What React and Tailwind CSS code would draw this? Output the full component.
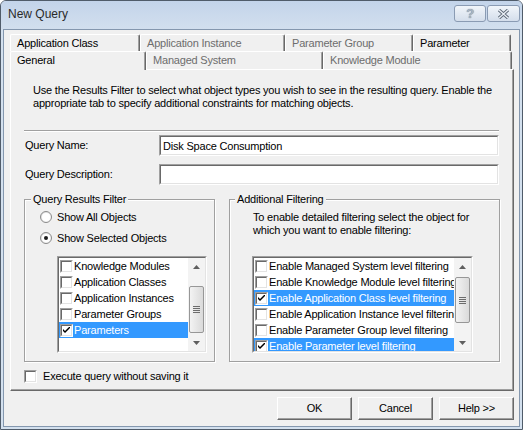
import React from "react";

function CheckBox({ checked }) {
  return (
    <div className="w-[13px] h-[13px] shrink-0 bg-white border border-t-[#a0a0a0] border-l-[#a0a0a0] border-b-white border-r-white">
      <div className="w-full h-full border border-t-[#696969] border-l-[#696969] border-b-[#e3e3e3] border-r-[#e3e3e3] flex items-center justify-center">
        {checked && (
          <svg width="7" height="7" viewBox="0 0 7 7">
            <path d="M0 2 L0 4 L2 6 L7 1 L7 -1 L2 4 Z" fill="#000" />
          </svg>
        )}
      </div>
    </div>
  );
}

function Radio({ checked }) {
  return (
    <div className="w-[12px] h-[12px] shrink-0 rounded-full border border-[#8a8a8a] bg-gradient-to-br from-[#dcdcdc] to-white flex items-center justify-center">
      <div className="w-[8px] h-[8px] rounded-full bg-white flex items-center justify-center">
        {checked && <div className="w-[4px] h-[4px] rounded-full bg-[#1a1a1a]" />}
      </div>
    </div>
  );
}

function Arrow({ up }) {
  return (
    <svg width="7" height="4" viewBox="0 0 7 4">
      {up ? <path d="M3.5 0 L7 4 L0 4 Z" fill="#5f5f5f" /> : <path d="M0 0 L7 0 L3.5 4 Z" fill="#5f5f5f" />}
    </svg>
  );
}

function ScrollBar({ thumbClass }) {
  return (
    <div className="w-[17px] h-full shrink-0 bg-[#f3f3f3] flex flex-col">
      <div className="h-[17px] shrink-0 flex items-center justify-center">
        <Arrow up />
      </div>
      <div className="flex-1 relative">
        <div className={`${thumbClass} mx-[1px] w-[15px] rounded-[2px] border border-[#979797] bg-gradient-to-r from-[#f3f3f3] to-[#dadada] flex flex-col items-center justify-center gap-[1px]`}>
          <div className="w-[7px] h-px bg-[#6c6c6c]" />
          <div className="w-[7px] h-px bg-[#6c6c6c]" />
          <div className="w-[7px] h-px bg-[#6c6c6c]" />
          <div className="w-[7px] h-px bg-[#6c6c6c]" />
        </div>
      </div>
      <div className="h-[17px] shrink-0 flex items-center justify-center">
        <Arrow />
      </div>
    </div>
  );
}

function ListRow({ label, checked, selected }) {
  return (
    <div
      className={
        selected
          ? "h-[16px] shrink-0 flex items-center pl-[1px] bg-[#3399ff] text-white"
          : "h-[16px] shrink-0 flex items-center pl-[1px] text-black"
      }
    >
      <CheckBox checked={checked} />
      <span className="ml-[1px] whitespace-nowrap leading-[14px]">{label}</span>
    </div>
  );
}

function Sunken({ className, children }) {
  return (
    <div className={`${className} border border-t-[#a0a0a0] border-l-[#a0a0a0] border-b-white border-r-white`}>
      <div className="w-full h-full border border-t-[#696969] border-l-[#696969] border-b-[#e3e3e3] border-r-[#e3e3e3] bg-white flex overflow-hidden">
        {children}
      </div>
    </div>
  );
}

function Tab({ className, label, disabled }) {
  return (
    <div
      className={`${className} shrink-0 border-t border-l border-t-white border-l-white border-r border-r-[#696969] shadow-[inset_-1px_0_0_#a0a0a0] rounded-t-[2px] pl-[6px] flex items-center whitespace-nowrap ${
        disabled ? "text-[#6d6d6d]" : "text-black"
      }`}
    >
      {label}
    </div>
  );
}

function GroupBox({ className, label, labelClass, children }) {
  return (
    <div className={`${className} relative border border-[#a0a0a0] shadow-[inset_1px_1px_0_#fff,1px_1px_0_#fff] flex flex-col`}>
      <div className={`${labelClass} absolute -top-[8px] px-[2px] bg-[#f0f0f0] leading-[14px] whitespace-nowrap`}>{label}</div>
      {children}
    </div>
  );
}

function Button({ children }) {
  return (
    <div className="w-[75px] h-[23px] border border-t-white border-l-white border-b-[#696969] border-r-[#696969] shadow-[inset_-1px_-1px_0_#a0a0a0] bg-[#f0f0f0] flex items-center justify-center">
      {children}
    </div>
  );
}

export default function App() {
  return (
    <div className="w-[523px] h-[430px] font-['Liberation_Sans',Arial,sans-serif] text-[11px] tracking-[-0.2px] text-black">
      <div className="w-full h-full flex flex-col bg-[#d3e0ee] border border-[#505c6a] rounded-t-[6px] overflow-hidden">
        {/* Title bar */}
        <div className="h-[28px] shrink-0 flex items-start bg-gradient-to-b from-[#c3d4ea] to-[#d2dfee]">
          <div className="mt-[6px] ml-[7px] text-[12px] tracking-normal leading-[15px] text-[#2a2a2a]">New Query</div>
          <div className="ml-auto mt-[4px] mr-[2px] flex gap-[1px]">
            <div className="w-[32px] h-[17px] rounded-[3px] border border-[#8a9bb3] bg-gradient-to-b from-[#f1f5fa] to-[#d4deeb] flex items-center justify-center">
              <span className="text-[13px] font-bold leading-none text-[#a9b4c2] [text-shadow:0_0_1px_#5d6876]">?</span>
            </div>
            <div className="w-[33px] h-[17px] rounded-[3px] border border-[#8a9bb3] bg-gradient-to-b from-[#f1f5fa] to-[#d4deeb] flex items-center justify-center">
              <svg width="13" height="10" viewBox="0 0 13 10">
                <path d="M2 1 L11 9 M11 1 L2 9" stroke="#5d6876" strokeWidth="3.2" />
                <path d="M2 1 L11 9 M11 1 L2 9" stroke="#e9eef5" strokeWidth="1.4" />
              </svg>
            </div>
          </div>
        </div>

        {/* Client area */}
        <div className="flex-1 mx-[2px] mb-[2px] border border-[#8497ae] bg-[#f0f0f0] flex flex-col">
          <div className="ml-[6px] mt-[4px] w-[504px] flex flex-col">
            {/* Tab row 1 */}
            <div className="h-[17px] flex">
              <Tab className="w-[130px] h-[17px]" label="Application Class" />
              <Tab className="w-[145px] h-[17px]" label="Application Instance" disabled />
              <Tab className="w-[128px] h-[17px]" label="Parameter Group" disabled />
              <Tab className="w-[98px] h-[17px]" label="Parameter" />
            </div>
            {/* Tab row 2 */}
            <div className="h-[18px] flex items-start">
              <div className="relative z-10 w-[136px] h-[19px] shrink-0 bg-[#f0f0f0] border-t border-l border-t-white border-l-white border-r border-r-[#696969] shadow-[inset_-1px_0_0_#a0a0a0] rounded-t-[2px] pl-[6px] pb-[1px] flex items-center">
                General
              </div>
              <Tab className="w-[177px] h-[18px]" label="Managed System" disabled />
              <Tab className="w-[189px] h-[18px]" label="Knowledge Module" disabled />
            </div>
            {/* Panel */}
            <div className="h-[322px] border-t border-l border-t-white border-l-white border-r border-b border-r-[#696969] border-b-[#696969] shadow-[inset_-1px_-1px_0_#a0a0a0] flex flex-col">
              <div className="ml-[22px] mt-[14px] leading-[13px] whitespace-nowrap">
                Use the Results Filter to select what object types you wish to see in the resulting query. Enable the
                <br />
                appropriate tab to specify additional constraints for matching objects.
              </div>
              <div className="ml-[13px] mt-[20px] w-[475px] h-[2px] border-t border-t-[#a0a0a0] border-b border-b-white" />
              <div className="ml-[14px] mt-[3px] flex items-center">
                <div className="w-[134px]">Query Name:</div>
                <Sunken className="w-[340px] h-[21px]">
                  <div className="pl-[2px] self-center leading-[14px]">Disk Space Consumption</div>
                </Sunken>
              </div>
              <div className="ml-[14px] mt-[8px] flex items-center">
                <div className="w-[134px]">Query Description:</div>
                <Sunken className="w-[340px] h-[21px]">
                  <div />
                </Sunken>
              </div>

              <div className="ml-[13px] mt-[14px] flex gap-[14px]">
                <GroupBox className="w-[191px] h-[163px]" label="Query Results Filter" labelClass="left-[6px]">
                  <div className="ml-[15px] mt-[11px] h-[12px] flex items-center">
                    <Radio />
                    <span className="ml-[5px] leading-[12px]">Show All Objects</span>
                  </div>
                  <div className="ml-[15px] mt-[9px] h-[12px] flex items-center">
                    <Radio checked />
                    <span className="ml-[5px] leading-[12px]">Show Selected Objects</span>
                  </div>
                  <Sunken className="ml-[32px] mt-[12px] w-[150px] h-[97px]">
                    <div className="w-[129px] flex flex-col">
                      <ListRow label="Knowledge Modules" />
                      <ListRow label="Application Classes" />
                      <ListRow label="Application Instances" />
                      <ListRow label="Parameter Groups" />
                      <ListRow label="Parameters" checked selected />
                    </div>
                    <ScrollBar thumbClass="mt-[11px] h-[47px]" />
                  </Sunken>
                </GroupBox>

                <GroupBox className="w-[271px] h-[163px]" label="Additional Filtering" labelClass="left-[5px]">
                  <div className="ml-[23px] mt-[11px] leading-[13px] whitespace-nowrap">
                    To enable detailed filtering select the object for
                    <br />
                    which you want to enable filtering:
                  </div>
                  <Sunken className="ml-[22px] mt-[19px] w-[221px] h-[97px]">
                    <div className="w-[200px] flex flex-col overflow-hidden">
                      <ListRow label="Enable Managed System level filtering" />
                      <ListRow label="Enable Knowledge Module level filtering" />
                      <ListRow label="Enable Application Class level filtering" checked selected />
                      <ListRow label="Enable Application Instance level filtering" />
                      <ListRow label="Enable Parameter Group level filtering" />
                      <ListRow label="Enable Parameter level filtering" checked selected />
                    </div>
                    <ScrollBar thumbClass="mt-[2px] h-[46px]" />
                  </Sunken>
                </GroupBox>
              </div>

              <div className="ml-[13px] mt-[8px] flex items-center">
                <CheckBox />
                <span className="ml-[6px] leading-[13px]">Execute query without saving it</span>
              </div>
            </div>
          </div>

          {/* Buttons */}
          <div className="mt-[6px] mr-[5px] flex justify-end gap-[6px]">
            <Button>OK</Button>
            <Button>Cancel</Button>
            <Button>Help &gt;&gt;</Button>
          </div>
        </div>
      </div>
    </div>
  );
}
